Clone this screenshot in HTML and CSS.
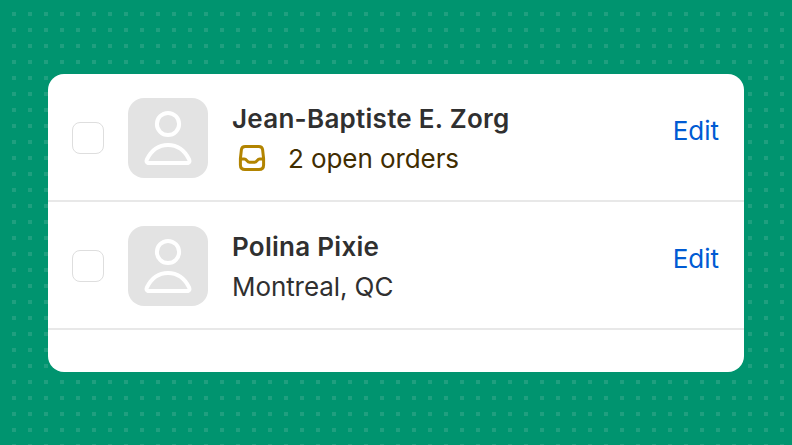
FILE: index.html
```html
<!DOCTYPE html>
<html lang="en">

<head>
    <meta charset="UTF-8">
    <meta name="viewport" content="width=device-width, initial-scale=1.0">
    <title>Customers</title>
    <link rel="stylesheet" href="styles.css">
</head>

<body>
    <ul class="card">
        <li class="row">
            <span class="checkbox" role="checkbox" aria-checked="false"></span>
            <div class="avatar">
                <svg viewBox="0 0 80 80">
                    <circle cx="40" cy="26" r="11.1" />
                    <path d="M20.2 65H59.8Q62.2 64.2 61.2 61.6C56.5 52 48.5 47 40 47S23.5 52 18.8 61.6Q17.8 64.2 20.2 65Z" />
                </svg>
            </div>
            <div class="info">
                <h2 class="name">Jean-Baptiste E. Zorg</h2>
                <p class="detail orders">
                    <svg class="inbox" viewBox="0 0 40 40">
                        <path d="M13.2 7.5H26.8Q30.1 7.5 30.6 10.6L31.6 19.5V26Q31.6 30.5 27 30.5H13Q8.4 30.5 8.4 26V19.5L9.4 10.6Q9.9 7.5 13.2 7.5Z" />
                        <path d="M8.5 20H12.3C15 20 14.8 23.2 17.5 23.2H22.5C25.2 23.2 25 20 27.7 20H31.5" />
                    </svg>
                    <span class="count">2 open orders</span>
                </p>
            </div>
            <a class="edit">Edit</a>
        </li>
        <li class="row">
            <span class="checkbox" role="checkbox" aria-checked="false"></span>
            <div class="avatar">
                <svg viewBox="0 0 80 80">
                    <circle cx="40" cy="26" r="11.1" />
                    <path d="M20.2 65H59.8Q62.2 64.2 61.2 61.6C56.5 52 48.5 47 40 47S23.5 52 18.8 61.6Q17.8 64.2 20.2 65Z" />
                </svg>
            </div>
            <div class="info">
                <h2 class="name">Polina Pixie</h2>
                <p class="detail">Montreal, QC</p>
            </div>
            <a class="edit">Edit</a>
        </li>
    </ul>
</body>

</html>
```
FILE: styles.css
```css
* {
    margin: 0;
    padding: 0;
    box-sizing: border-box;
}

body {
    height: 445px;
    padding: 74px 48px 73px;
    overflow: hidden;
    /* dotted green background */
    background-color: #00946f;
    background-image: conic-gradient(from 270deg at 4px 4px, #1f9f7f 90deg, transparent 0);
    background-size: 16px 16px;
    background-position: 12px 12px;
    font-family: Inter, "Liberation Sans", sans-serif;
    font-size: 26px;
    line-height: 40px;
    color: #303030;
}

.card {
    height: 298px;
    list-style: none;
    background-color: #fff;
    border-radius: 16px;
}

.row {
    display: flex;
    height: 128px;
    padding: 24px 24px 22px;
    border-bottom: 2px solid #e8e8e8;
}

.checkbox {
    width: 32px;
    height: 32px;
    margin: 24px 24px 0 0;
    border: 1px solid #dedede;
    border-radius: 8px;
}

.avatar {
    width: 80px;
    height: 80px;
    margin-right: 24px;
    background-color: #e3e3e3;
    border-radius: 16px;
}

.avatar svg {
    display: block;
    fill: none;
    stroke: #fff;
    stroke-width: 4;
    stroke-linejoin: round;
}

.info {
    flex: 1;
    padding-top: 1px;
}

.name {
    font-size: 26px;
    font-weight: 600;
    letter-spacing: 0.27px;
}

.detail {
    letter-spacing: -0.08px;
}

.orders {
    display: flex;
    color: #412d00;
}

.inbox {
    width: 40px;
    height: 40px;
    margin-right: 16px;
    fill: none;
    stroke: #b28400;
    stroke-width: 3;
}

.edit {
    margin-top: 13px;
    padding-right: 1px;
    color: #005bd3;
}
```
